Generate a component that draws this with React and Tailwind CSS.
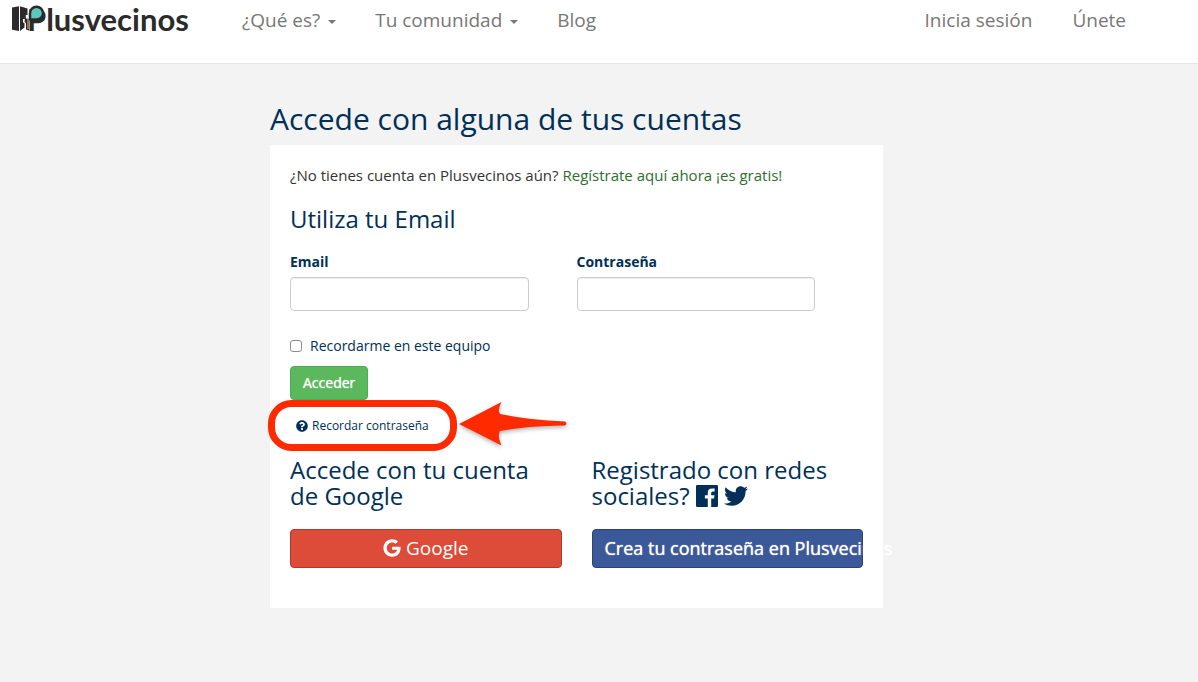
import React, { useState } from 'react';
import { FaTwitter, FaQuestionCircle, FaGoogle } from 'react-icons/fa';

const menu = [
  { label: '¿Qué es?', dropdown: true },
  { label: 'Tu comunidad', dropdown: true },
  { label: 'Blog', dropdown: false },
];

const Logo = () => (
  <a href="#inicio" className="relative flex w-[190px] shrink-0 items-start">
    <span className="pl-[15px] font-['Lato'] text-[31px] font-bold leading-[38px] text-[#2b2b29]">Plusvecinos</span>
    {/* Open door with a leaf in the bowl of the P */}
    <svg viewBox="0 0 36 28" className="absolute left-0 top-[4px] h-7 w-9" aria-hidden="true">
      <path d="M0 3.500 7 2.200V27L0 25.800z" fill="#2b2b29" />
      <path d="M8 2.200 15.500 4.500V11H13.800V15H11V18.500L12.500 19V23.500L8 27z" fill="#2b2b29" />
      <path d="M13 14.500H17V26.500L14 25.500V19.500L12.500 17.500z" fill="#2b2b29" />
      <path
        d="M18 15.500V9.200A6.500 6.500 0 0 1 31 9.200 6.300 6.300 0 0 1 24.700 15.500H18z"
        fill="#5cc8bd"
        stroke="#2b2b29"
        strokeWidth="2.500"
        strokeLinejoin="round"
      />
      <path d="M16 13V25" stroke="#ffffff" strokeWidth="0.700" />
    </svg>
  </a>
);

const Navbar = () => (
  <header className="h-16 border-b border-[#e7e7e7] bg-white pl-3 pr-[72px]">
    <nav className="flex items-start justify-between">
      <Logo />
      <ul className="ml-10 flex flex-1 gap-[39px] text-[19px] leading-10 text-[#777777]">
        {menu.map((item) => (
          <li key={item.label}>
            {item.dropdown ? (
              <button type="button" className="flex items-center gap-2">
                {item.label}
                <span className="mt-1 border-x-4 border-t-4 border-x-transparent border-t-[#777777]" />
              </button>
            ) : (
              <a href="#blog">{item.label}</a>
            )}
          </li>
        ))}
      </ul>
      <div className="flex gap-10 text-[19px] leading-10 text-[#777777]">
        <a href="#inicia-sesion">Inicia sesión</a>
        <a href="#unete">Únete</a>
      </div>
    </nav>
  </header>
);

const Field = ({ id, label, type, value, onChange }) => (
  <div className="flex-1">
    <label htmlFor={id} className="mb-[5px] block text-sm font-bold leading-5">
      {label}
    </label>
    <input
      id={id}
      type={type}
      value={value}
      onChange={(e) => onChange(e.target.value)}
      className="block h-[34px] w-full rounded border border-[#cccccc] bg-white px-3 text-sm text-[#555555] shadow-[inset_0_1px_1px_rgba(0,0,0,0.075)]"
    />
  </div>
);

// Red ring and arrow that point at the password reminder
const Highlight = () => (
  <svg
    viewBox="0 0 302 54"
    className="pointer-events-none absolute -left-[22px] -top-[17px] h-[54px] w-[302px]"
    aria-hidden="true"
  >
    <rect x="3.500" y="4.500" width="182" height="44" rx="20" fill="none" stroke="#ff2a00" strokeWidth="7" />
    <path
      d="M191 25 233.500 3Q229 11 232 15Q261 21 297 22.500Q300 24.500 297 26.500Q258 27 232 32Q229 37 233.500 46.500z"
      fill="#ff2a00"
      className="drop-shadow-[0_2px_2px_rgba(0,0,0,0.3)]"
    />
  </svg>
);

const LoginForm = () => {
  const [email, setEmail] = useState('');
  const [password, setPassword] = useState('');
  const [remember, setRemember] = useState(false);

  return (
    <form onSubmit={(e) => e.preventDefault()}>
      <div className="flex gap-12 pr-12">
        <Field id="email" label="Email" type="email" value={email} onChange={setEmail} />
        <Field id="password" label="Contraseña" type="password" value={password} onChange={setPassword} />
      </div>
      <label className="mt-[25px] flex items-center gap-2 text-sm leading-5">
        <input
          type="checkbox"
          checked={remember}
          onChange={(e) => setRemember(e.target.checked)}
          className="h-3 w-3 appearance-none rounded-[3px] border border-[#8c8c8c] bg-white checked:bg-[#3b5998]"
        />
        Recordarme en este equipo
      </label>
      <button
        type="submit"
        className="mt-[10px] block h-[34px] rounded border border-[#4cae4c] bg-[#5cb85c] px-3 text-sm font-medium text-white [text-shadow:0_0_1px_#ffffff]"
      >
        Acceder
      </button>
      <div className="relative mt-4">
        <a href="#recordar" className="flex items-center gap-1 pl-[6px] text-xs leading-5">
          <FaQuestionCircle className="h-3 w-3" />
          Recordar contraseña
        </a>
        <Highlight />
      </div>
    </form>
  );
};

const App = () => {
  return (
    <div className="min-h-screen bg-[#f3f3f3] font-['Open_Sans',sans-serif] text-[#003057]">
      <Navbar />
      <div className="pr-[45px]">
        <main className="mx-auto w-full max-w-[613px] pt-[38px]">
          <h1 className="mb-[10px] text-[30px] leading-[33px]">Accede con alguna de tus cuentas</h1>
          <div className="bg-white px-5 pb-10 pt-5">
            <p className="text-[15px] leading-[21px] text-[#333333]">
              ¿No tienes cuenta en Plusvecinos aún?{' '}
              <a href="#registro" className="text-[#2d6e2f]">Regístrate aquí ahora ¡es gratis!</a>
            </p>
            <h2 className="mb-5 mt-5 text-2xl leading-[26px]">Utiliza tu Email</h2>
            <LoginForm />

            {/* Social accounts */}
            <div className="mt-[21px] grid grid-cols-2 gap-[30px]">
              <section>
                <h2 className="mb-5 text-2xl leading-[26px]">Accede con tu cuenta de Google</h2>
                <button
                  type="button"
                  className="flex h-[39px] w-full items-center justify-center gap-[5px] rounded border border-[#b1392a] bg-[#dd4b39] pb-px text-[19px] leading-6 text-white"
                >
                  <FaGoogle className="h-[18px] w-[18px]" />
                  Google
                </button>
              </section>
              <section>
                <h2 className="mb-5 text-2xl leading-[26px]">
                  Registrado con redes sociales?{' '}
                  <span className="inline-flex h-[26px] items-center gap-[6px] align-top">
                    <svg viewBox="0 0 22 22" className="h-[22px] w-[22px]" aria-hidden="true">
                      <path
                        fill="currentColor"
                        d="M1.200 0H20.800A1.200 1.200 0 0 1 22 1.200V20.800A1.200 1.200 0 0 1 20.800 22H15.200V13.500H18L18.500 10.200H15.200V8Q15.200 6.500 16.800 6.500H18.600V3.500L16 3.400Q11.800 3.500 11.800 7.500V10.200H8.900V13.500H11.800V22H1.200A1.200 1.200 0 0 1 0 20.800V1.200A1.200 1.200 0 0 1 1.200 0z"
                      />
                    </svg>
                    <FaTwitter />
                  </span>
                </h2>
                <button
                  type="button"
                  className="flex h-[39px] w-full items-center whitespace-nowrap rounded border border-[#2d4373] bg-[#3b5998] px-3 pb-px text-lg leading-6 font-medium text-white [text-shadow:0_0_1px_#ffffff]"
                >
                  Crea tu contraseña en Plusvecinos
                </button>
              </section>
            </div>
          </div>
        </main>
      </div>
    </div>
  );
};

export default App;
